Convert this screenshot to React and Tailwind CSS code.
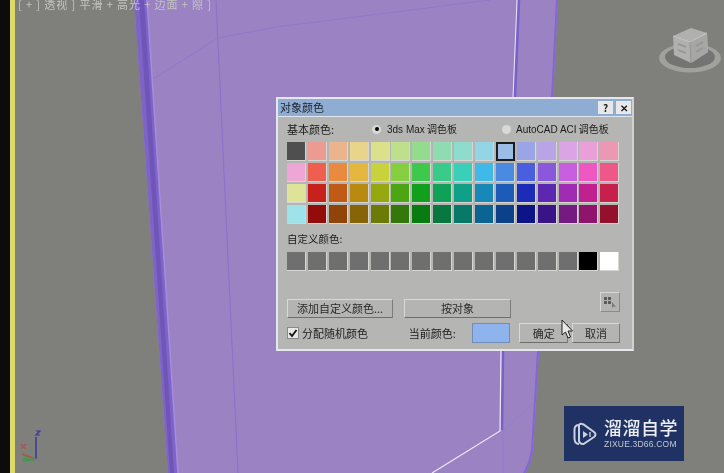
const cjk = { fontFamily: '"Noto Sans CJK SC", sans-serif' };

const basic = [
  '#4f4f4f','#ed9a93','#ecb48c','#e8d58b','#dbe08a','#bee08c','#93db8e','#8edcb2','#8edccd','#93d5e6','#9cbce8','#9ca4e8','#b9a4e8','#dba4e4','#ea9fd8','#ec97b4',
  '#eea6d6','#ef5f50','#ea8a3e','#e4b83e','#c8d23c','#86cf40','#3fc94c','#3acb8a','#3acfb8','#40b8e8','#4a8ae0','#4a5ee0','#8a58dc','#c85ee0','#ee58c0','#ee5888',
  '#dfe39a','#c8201c','#c05a14','#b88a10','#96a810','#4ca614','#10a01c','#10a058','#10a088','#1888b8','#1c5cb8','#1c2cb8','#5c28b0','#a02cb4','#c02090','#c8204c',
  '#9fe3ea','#940c0a','#90440a','#886408','#6c7a08','#34780c','#087c10','#087840','#087868','#0c6494','#0c4088','#0c1488','#381488','#741a80','#90146c','#94102c',
];
const custom = [...Array(14).fill('#6f6f6f'), '#000000', '#ffffff'];

function Swatch({ color, selected }) {
  return (
    <div
      className={selected ? 'h-[19px] border-2 border-[#1c1c1c]' : 'h-[19px] border-b border-r border-[#d6d6d2]'}
      style={{ backgroundColor: color }}
    />
  );
}

function Btn({ className, children }) {
  return (
    <div className={`flex items-center justify-center border border-t-[#d8d8d8] border-l-[#d8d8d8] border-b-[#6e6e6e] border-r-[#7c7c7c] bg-[#b4b4b2] text-[11px] text-[#2a2a2a] ${className}`}>
      {children}
    </div>
  );
}

function Scene() {
  return (
    <svg className="absolute inset-0" width="709" height="473" viewBox="15 0 709 473">
      <path d="M134 0 L558 0 L553 97 L539 351 L533 450 Q531 464 525 473 L168 473 Z" fill="#9b82c3" />
      <path d="M134 0 L147 0 L178 473 L168 473 Z" fill="#7f64c8" />
      <path d="M139 0 L144 0 L174 473 L170 473 Z" fill="#7055b8" />
      <path d="M147 0 L178 473" stroke="#a88ce0" strokeWidth="1.5" fill="none" />
      <path d="M216 0 L238 473" stroke="#8a70cc" strokeWidth="1" fill="none" />
      <path d="M153 79 L218 38 L276 27 L490 0" stroke="#9078cc" strokeWidth="1" fill="none" />
      <path d="M557 0 L552 97 L538 351 L532 450 Q530 464 524 473" stroke="#8266da" strokeWidth="2" fill="none" />
      <path d="M519 0 L515 97" stroke="#7a60cc" strokeWidth="2.5" fill="none" />
      <path d="M517 0 L513 97" stroke="#ece4f4" strokeWidth="1" fill="none" />
      <path d="M503 351 L502 430" stroke="#7a5ecb" strokeWidth="2.5" fill="none" />
      <path d="M501 351 L500 431 L432 473" stroke="#f0e8f6" strokeWidth="1.2" fill="none" />
      <path d="M503 432 L503 473 M503 431 L534 402" stroke="#937ad0" strokeWidth="0.7" fill="none" />

      <ellipse cx="690" cy="58" rx="31" ry="14.5" fill="#a0a09c" />
      <ellipse cx="690" cy="57" rx="25" ry="11" fill="#747472" />
      <path d="M673 36 L691 28 L707 33 L708 52 L691 63 L674 55 Z" fill="#b0b0ae" />
      <path d="M673 36 L690 42 L707 33" stroke="#c4c4c2" strokeWidth="1" fill="none" />
      <path d="M691 42 L707 34 L708 52 L691 63 Z" fill="#a6a6a4" />
      <path d="M690 42 L691 63" stroke="#929290" strokeWidth="1" fill="none" />
      <path d="M678 44 L686 47 M678 50 L686 53 M696 46 L703 42 M696 52 L703 48" stroke="#949492" strokeWidth="1.5" fill="none" />

      <path d="M36 437 L36 459" stroke="#3c3498" strokeWidth="1.5" />
      <path d="M36 459 L22 454" stroke="#b8504a" strokeWidth="1.5" />
      <path d="M36 459 L23 461" stroke="#3f9a4a" strokeWidth="2" />
      <path d="M22 455 L30 458 M23 458 L31 460" stroke="#3f9a4a" strokeWidth="1" />
      <path d="M36 431 L40 431 L36 435 L40 435" stroke="#3c3498" strokeWidth="1.2" fill="none" />
      <path d="M21 444 L26 449 M26 444 L21 449" stroke="#b8504a" strokeWidth="1.4" />
    </svg>
  );
}

function Logo() {
  return (
    <div className="absolute left-[549px] top-[406px] flex h-[55px] w-[120px] items-center gap-[6px] bg-[#1f3263] pl-[8px]">
      <svg width="26" height="28" viewBox="0 0 26 28" fill="none" stroke="#c9d0de" strokeWidth="2">
        <path d="M7 5 Q3 5 2.5 9 L2.5 19 Q3 24 7 24" />
        <path d="M7 5 L7 21 Q8 24.5 11.5 24 L22 17 Q25 14.5 22 12 L11.5 4.5 Q8 3 7 5" />
        <path d="M11 11 L11 18 L16 14.5 Z" fill="#c9d0de" stroke="none" />
        <path d="M18 12 L18 17" strokeWidth="1.4" />
      </svg>
      <div className="flex flex-col pb-[4px]">
        <span className="text-[18px] font-medium leading-[24px] tracking-[0.5px] text-[#eceef2]" style={cjk}>溜溜自学</span>
        <span className="text-[8.5px] leading-[10px] tracking-[0.2px] text-[#c2c8d6] font-['Liberation_Sans',sans-serif]">ZIXUE.3D66.COM</span>
      </div>
    </div>
  );
}

function Dialog() {
  return (
    <div className="absolute left-[261px] top-[97px] flex h-[254px] w-[358px] flex-col border-2 border-[#e4e8ee] border-r-[#d0d0d0] bg-[#b5b5b3] text-[#1c1c1c]" style={cjk}>
      <div className="flex h-[18px] shrink-0 items-center justify-between border-b border-[#dfe6ee] bg-[#8fadd2] pl-[2px] pr-[1px]">
        <span className="text-[11px] text-[#20242c]">对象颜色</span>
        <div className="flex gap-[3px]">
          <div className="flex h-[13px] w-[15px] items-center justify-center bg-[#e8e8e8] text-[10px] font-bold leading-none">?</div>
          <div className="flex h-[13px] w-[15px] items-center justify-center bg-[#e8e8e8] text-[10px] font-bold leading-none">✕</div>
        </div>
      </div>

      <div className="flex flex-1 flex-col pl-[9px] pr-[12px]">
        <div className="flex h-[24px] items-center text-[10.5px]">
          <span className="w-[85px] text-[11px]">基本颜色:</span>
          <div className="mr-[6px] flex h-[9px] w-[9px] items-center justify-center rounded-full bg-[#d8d8d8]">
            <div className="h-[4px] w-[4px] rounded-full bg-black" />
          </div>
          <span className="w-[115px] whitespace-nowrap text-[10px]"><span className="font-['Liberation_Sans',sans-serif]">3ds Max</span> 调色板</span>
          <div className="mr-[5px] h-[9px] w-[9px] rounded-full bg-[#d8d8d8]" />
          <span className="whitespace-nowrap text-[10px]"><span className="font-['Liberation_Sans',sans-serif]">AutoCAD ACI</span> 调色板</span>
        </div>

        <div className="grid grid-cols-[repeat(16,19px)] gap-x-[1.9px] gap-y-[2px] pt-[1px]">
          {basic.map((c, i) => <Swatch key={i} color={c} selected={i === 10} />)}
        </div>

        <div className="mt-[5px] h-[19px] text-[10.5px] leading-[19px]">自定义颜色:</div>
        <div className="mt-[4px] grid grid-cols-[repeat(16,19px)] gap-x-[1.9px]">
          {custom.map((c, i) => <Swatch key={i} color={c} />)}
        </div>

        <div className="mt-[21px] flex items-start">
          <Btn className="mt-[7px] h-[19px] w-[106px]">添加自定义颜色...</Btn>
          <Btn className="ml-[11px] mt-[7px] h-[19px] w-[107px]">按对象</Btn>
          <div className="ml-auto flex h-[20px] w-[20px] items-center justify-center border border-t-[#d8d8d8] border-l-[#d8d8d8] border-b-[#8a8a8a] border-r-[#8a8a8a] bg-[#b4b4b2]">
            <svg width="16" height="14" viewBox="0 0 16 14">
              <path d="M2 2h3v3H2zM6 2h3v3H6zM2 6h3v3H2zM6 6h3v3H6z" fill="#5c5c5c" />
              <path d="M10 7 L10 13 L11.5 11.5 L14 12 Z" fill="#7a7a7a" />
            </svg>
          </div>
        </div>

        <div className="mt-[5px] flex items-center text-[11px]">
          <div className="flex h-[12px] w-[12px] items-center justify-center border border-[#8a8a8a] bg-[#e8e8e8]">
            <svg width="10" height="10" viewBox="0 0 10 10">
              <path d="M1.5 5 L4 8 L8.5 2" stroke="#111" strokeWidth="1.8" fill="none" />
            </svg>
          </div>
          <span className="ml-[3px] w-[107px]">分配随机颜色</span>
          <span className="w-[64px]">当前颜色:</span>
          <div className="h-[20px] w-[38px] border border-[#6f8db8] bg-[#8fb3ec]" />
          <Btn className="ml-[9px] h-[20px] w-[49px]">确定</Btn>
          <Btn className="ml-[4px] h-[20px] w-[48px]">取消</Btn>
        </div>
      </div>

      <svg className="absolute left-[283px] top-[220px]" width="13" height="21" viewBox="0 0 13 21">
        <path d="M1 1 L1 16 L4.5 13 L7 19 L9.5 18 L7 12 L11.5 12 Z" fill="#e8e8e8" stroke="#222" strokeWidth="1" />
      </svg>
    </div>
  );
}

export default function App() {
  return (
    <div className="flex h-[473px] w-[724px] overflow-hidden bg-[#7f7f7b] blur-[0.5px]">
      <div className="w-[10px] shrink-0 bg-[#0c0c0c]" />
      <div className="w-[5px] shrink-0 bg-[#dcd968]" />
      <div className="relative flex-1">
        <Scene />
        <div className="absolute left-[3px] top-[-3px] whitespace-pre text-[11px] leading-[14px] tracking-[0.9px] text-[#c4c4c0]" style={cjk}>
          [ + ] 透视 ] 平滑 + 高光 + 边面 + 隙 ]
        </div>
        <Dialog />
        <Logo />
      </div>
    </div>
  );
}
